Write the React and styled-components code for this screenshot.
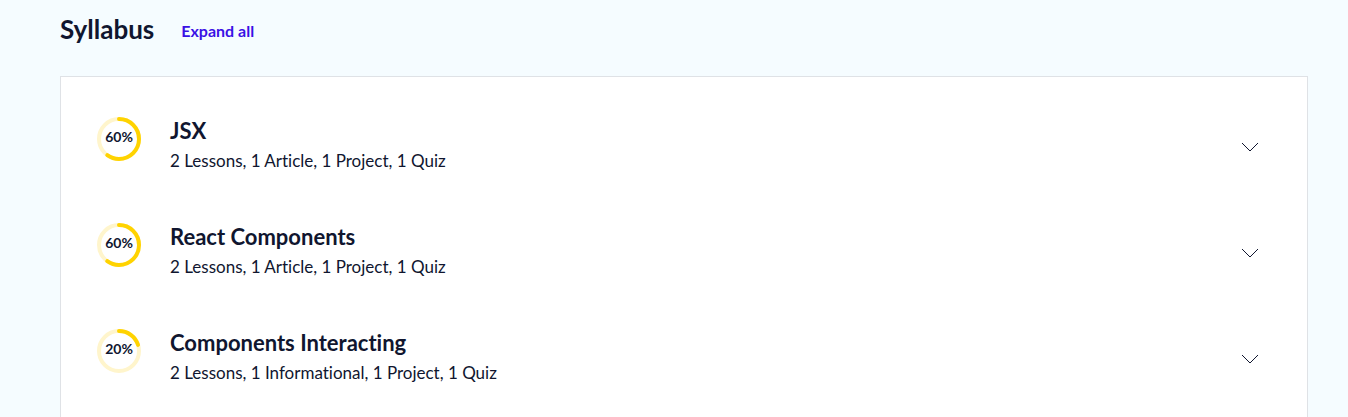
import React, { useState } from "react";
import styled, { createGlobalStyle } from "styled-components";

const GlobalStyle = createGlobalStyle`
  *, *::before, *::after { box-sizing: border-box; }
  body {
    margin: 0;
    background: #f5fcff;
    color: #10162f;
    font-family: Lato, "Open Sans", sans-serif;
    font-variant-ligatures: none;
  }
`;

const Page = styled.main`
  display: flex;
  flex-direction: column;
  min-height: 100vh;
  padding: 12px 40px 0 60px;
`;

const Header = styled.header`
  display: flex;
  align-items: center;
  gap: 27px;
  margin-bottom: 30px;
`;

const Heading = styled.h2`
  margin: 0;
  font-size: 26px;
  line-height: 34px;
  font-weight: 700;
`;

const TextButton = styled.button`
  padding: 4px 0 0;
  border: 0;
  background: none;
  color: #3a10e5;
  font: inherit;
  font-size: 16px;
  line-height: 24px;
  font-weight: 700;
  cursor: pointer;
`;

const ModuleList = styled.ul`
  flex: 1;
  margin: 0;
  padding: 16px 0 0;
  list-style: none;
  background: #fff;
  border: 1px solid #dfe2e6;
  border-bottom: 0;
`;

const ModuleButton = styled.button`
  display: flex;
  align-items: center;
  width: 100%;
  height: 106px;
  padding: 0 48px 0 36px;
  border: 0;
  background: none;
  color: inherit;
  font: inherit;
  font-variant-ligatures: none;
  text-align: left;
  cursor: pointer;
`;

const Summary = styled.span`
  display: flex;
  align-items: flex-start;
  flex: 1;
  gap: 29px;
  padding-bottom: 2px;
`;

const Ring = styled.span`
  display: grid;
  place-items: center;
  width: 44px;
  margin-top: 2px;

  > * { grid-area: 1 / 1; }
`;

const RingLabel = styled.span`
  padding-bottom: 4px;
  font-size: 14px;
  line-height: 16px;
  font-weight: 700;
`;

const Details = styled.span`
  display: flex;
  flex-direction: column;
`;

const Title = styled.span`
  font-size: 22px;
  line-height: 32px;
  font-weight: 700;
`;

const Meta = styled.span`
  font-size: 17px;
  line-height: 28px;
`;

const Chevron = styled.svg`
  flex: none;
  margin-top: 1px;
  transform: ${({ $open }) => ($open ? "rotate(180deg)" : "none")};
`;

const modules = [
  { title: "JSX", percent: 60, meta: "2 Lessons, 1 Article, 1 Project, 1 Quiz" },
  { title: "React Components", percent: 60, meta: "2 Lessons, 1 Article, 1 Project, 1 Quiz" },
  { title: "Components Interacting", percent: 20, meta: "2 Lessons, 1 Informational, 1 Project, 1 Quiz" },
];

function Progress({ percent }) {
  return (
    <Ring>
      <svg width="44" height="44" viewBox="0 0 44 44" fill="none" strokeWidth="4" aria-hidden="true">
        <circle cx="22" cy="22" r="20" stroke="#fff5cc" />
        <circle
          cx="22"
          cy="22"
          r="20"
          stroke="#ffd300"
          strokeLinecap="round"
          pathLength="100"
          strokeDasharray={`${percent} 100`}
          transform="rotate(-90 22 22)"
        />
      </svg>
      <RingLabel>{percent}%</RingLabel>
    </Ring>
  );
}

function Module({ title, percent, meta, open, onToggle }) {
  return (
    <li>
      <ModuleButton type="button" aria-expanded={open} onClick={onToggle}>
        <Summary>
          <Progress percent={percent} />
          <Details>
            <Title>{title}</Title>
            <Meta>{meta}</Meta>
          </Details>
        </Summary>
        <Chevron $open={open} width="18" height="10" viewBox="0 0 18 10" fill="none" stroke="#10162f" aria-hidden="true">
          <path d="M1 1 9 9l8-8" />
        </Chevron>
      </ModuleButton>
    </li>
  );
}

export default function App() {
  const [open, setOpen] = useState([]);
  const toggle = (title) =>
    setOpen((list) => (list.includes(title) ? list.filter((t) => t !== title) : [...list, title]));

  return (
    <>
      <GlobalStyle />
      <Page>
        <Header>
          <Heading>Syllabus</Heading>
          <TextButton type="button" onClick={() => setOpen(modules.map((m) => m.title))}>
            Expand all
          </TextButton>
        </Header>
        <ModuleList>
          {modules.map((m) => (
            <Module key={m.title} {...m} open={open.includes(m.title)} onToggle={() => toggle(m.title)} />
          ))}
        </ModuleList>
      </Page>
    </>
  );
}
